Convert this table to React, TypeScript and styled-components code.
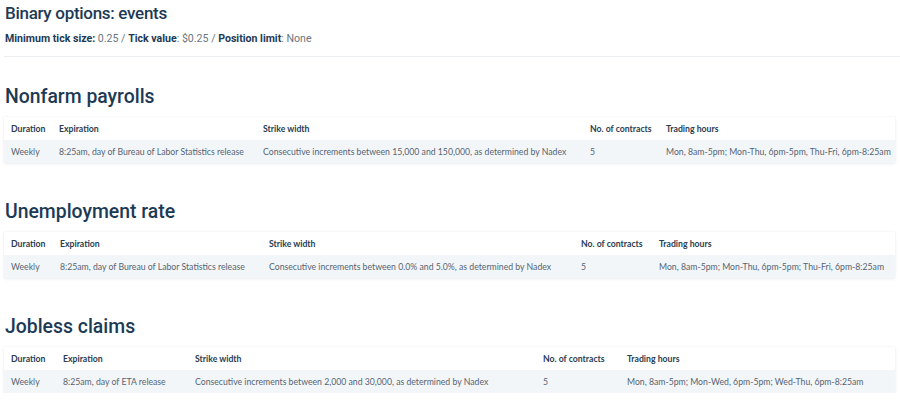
import React from "react";
import styled, { createGlobalStyle } from "styled-components";

const Global = createGlobalStyle`
  html, body { margin: 0; padding: 0; background: #ffffff; }
  body { font-family: "Lato", "Liberation Sans", sans-serif; }
`;

const Page = styled.div`
  padding: 2px 4px 0 4px;
  width: 892px;
  box-sizing: border-box;
`;

const Title = styled.h1`
  margin: 0 0 0 1px;
  font-family: "Roboto", "Liberation Sans", sans-serif;
  font-weight: 500;
  font-size: 17px;
  letter-spacing: -0.3px;
  line-height: 22px;
  color: #1d3a55;
`;

const Specs = styled.p`
  margin: 8px 0 0 1px;
  font-family: "Roboto", "Liberation Sans", sans-serif;
  font-size: 10.6px;
  line-height: 14px;
  color: #6b7680;
  b { color: #1d3a55; font-weight: 700; }
`;

const Divider = styled.hr`
  margin: 10px 0 0 0;
  border: none;
  border-top: 1px solid #eceff2;
  width: 896px;
`;

const Section = styled.section`
  margin-top: 27px;
  & + & { margin-top: 36px; }
`;

const Heading = styled.h2`
  margin: 0 0 7px 1px;
  font-family: "Roboto", "Liberation Sans", sans-serif;
  font-weight: 500;
  font-size: 19.4px;
  line-height: 26px;
  color: #1d3a55;
`;

const Table = styled.div<{ $cols: string }>`
  display: grid;
  grid-template-columns: ${(p) => p.$cols};
  width: 891px;
  background: #ffffff;
  box-shadow: 0 1px 3px rgba(30, 50, 80, 0.08), 0 0 1px rgba(30, 50, 80, 0.08);
`;

const Cell = styled.div<{ $head?: boolean }>`
  height: 23px;
  display: flex;
  align-items: center;
  padding-left: 7px;
  box-sizing: border-box;
  font-family: "Lato", "Liberation Sans", sans-serif;
  font-size: 8.7px;
  white-space: nowrap;
  font-weight: ${(p) => (p.$head ? 700 : 400)};
  color: ${(p) => (p.$head ? "#2a3d52" : "#566472")};
  background: ${(p) => (p.$head ? "#ffffff" : "#f3f6f9")};
`;

type Event = {
  name: string;
  cols: string;
  expiration: string;
  strike: string;
  hours: string;
};

const events: Event[] = [
  {
    name: "Nonfarm payrolls",
    cols: "48px 204px 327px 76px 1fr",
    expiration: "8:25am, day of Bureau of Labor Statistics release",
    strike: "Consecutive increments between 15,000 and 150,000, as determined by Nadex",
    hours: "Mon, 8am-5pm; Mon-Thu, 6pm-5pm, Thu-Fri, 6pm-8:25am",
  },
  {
    name: "Unemployment rate",
    cols: "49px 209px 312px 78px 1fr",
    expiration: "8:25am, day of Bureau of Labor Statistics release",
    strike: "Consecutive increments between 0.0% and 5.0%, as determined by Nadex",
    hours: "Mon, 8am-5pm; Mon-Thu, 6pm-5pm; Thu-Fri, 6pm-8:25am",
  },
  {
    name: "Jobless claims",
    cols: "52px 132px 348px 84px 1fr",
    expiration: "8:25am, day of ETA release",
    strike: "Consecutive increments between 2,000 and 30,000, as determined by Nadex",
    hours: "Mon, 8am-5pm; Mon-Wed, 6pm-5pm; Wed-Thu, 6pm-8:25am",
  },
];

const headers = ["Duration", "Expiration", "Strike width", "No. of contracts", "Trading hours"];

export default function App() {
  return (
    <Page>
      <Global />
      <Title>Binary options: events</Title>
      <Specs>
        <b>Minimum tick size:</b> 0.25 / <b>Tick value</b>: $0.25 / <b>Position limit</b>: None
      </Specs>
      <Divider />
      {events.map((e) => (
        <Section key={e.name}>
          <Heading>{e.name}</Heading>
          <Table $cols={e.cols}>
            {headers.map((h) => (
              <Cell $head key={h}>{h}</Cell>
            ))}
            <Cell>Weekly</Cell>
            <Cell>{e.expiration}</Cell>
            <Cell>{e.strike}</Cell>
            <Cell>5</Cell>
            <Cell>{e.hours}</Cell>
          </Table>
        </Section>
      ))}
    </Page>
  );
}
